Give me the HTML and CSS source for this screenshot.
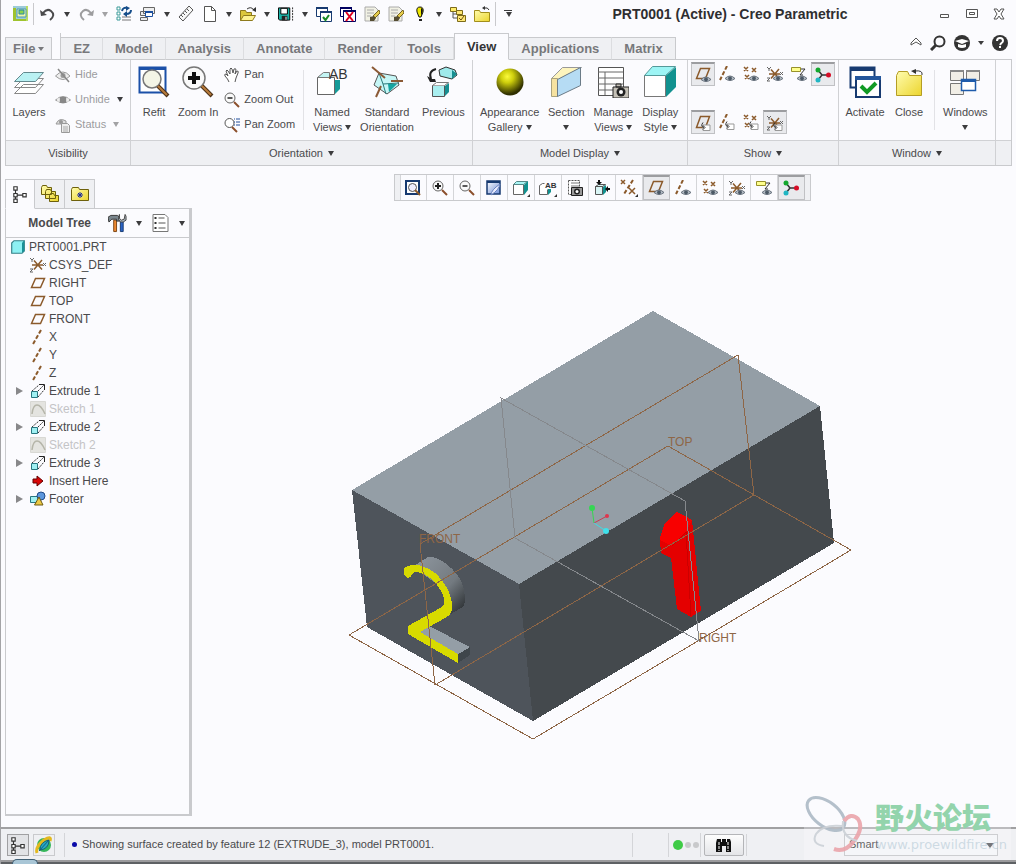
FILE: index.html
```html
<!DOCTYPE html>
<html lang="en">
<head>
    <meta charset="UTF-8">
    <meta name="viewport" content="width=device-width, initial-scale=1.0">
    <title>PRT0001 (Active) - Creo Parametric</title>
    <link rel="stylesheet" href="styles.css">
</head>
<body>
    <!-- Icon sprite -->
    <svg class="sprite" width="0" height="0" aria-hidden="true">
        <defs>
            <linearGradient id="folderFill" x1="0" y1="0" x2="1" y2="1"><stop offset="0" stop-color="#fffcae"/><stop offset="1" stop-color="#ecd52e"/></linearGradient>
            <linearGradient id="curl" x1="0" y1="0" x2="1" y2="1"><stop offset="0" stop-color="#fff"/><stop offset="1" stop-color="#6d8ed6"/></linearGradient>
            <radialGradient id="ball" cx=".4" cy=".3" r=".65"><stop offset="0" stop-color="#fbfb3c"/><stop offset=".35" stop-color="#cfcf0c"/><stop offset="1" stop-color="#303000"/></radialGradient>
            <linearGradient id="curve2" x1="0" y1="0" x2="1" y2="1"><stop offset="0" stop-color="#9098a0"/><stop offset=".6" stop-color="#737a80"/><stop offset="1" stop-color="#24282b"/></linearGradient>
            <g id="eye">
                <path d="M6 12.5q5-5 10 0q-5 4-10 0z" fill="#b3bbc4" stroke="#67717c"/>
                <circle cx="11" cy="12.3" r="1.9" fill="#4c5966"/>
            </g>
            <g id="tagcorner"><path d="M8 10h7v5.500H8z" fill="#fff" stroke="#999"/><path d="M8 7.500q-3 4 1 5M8 10.500l2 2-2 2" fill="none" stroke="#333"/></g>
            <g id="xs"><path d="M1 1l4 4M5 1l-4 4M9 2l4 4M13 2l-4 4M2 9l4 4M6 9l-4 4" stroke="#8b5a2b" stroke-width="1.500" fill="none"/></g>
            <g id="csysg"><path d="M2 8h11M4 3.500l8 9M12 3l-8 9.500" stroke="#8b5a2b" stroke-width="1.500"/><path d="M0 1l2 2 2-2M2 3v2M13 6l3 3M16 6l-3 3M0 12h3l-3 3h3" stroke="#666" fill="none"/></g>
        </defs>
        <symbol id="i-logo" viewBox="0 0 18 18"><path d="M1 1h15v15H1z" fill="#9ccbd8"/><path d="M1 3h3v11h12v2H1z" fill="#9fc32e"/><path d="M14 1h2v15h-2z" fill="#b9dc62"/><path d="M5 4h9v8H5z" fill="#f0f7a4" stroke="#4b96b8"/><path d="M7 5h5v4H7z" fill="#8bd34a" stroke="#2789ae"/></symbol>
        <symbol id="i-undo" viewBox="0 0 16 16"><path d="M3 7q4-5 8-2 5 4-1 9" fill="none" stroke="currentColor" stroke-width="2"/><path d="M0 4l1 6 6-1z" fill="currentColor"/></symbol>
        <symbol id="i-regen" viewBox="0 0 16 16"><path d="M1 1h3v3H1zM1 6h3v3H1zM1 11h3v3H1z" fill="#fff" stroke="#3b9a99"/><path d="M6 11h9M6 14h9" stroke="#777"/><path d="M6 5q1-4 5-3M15 4q0 4-5 4" fill="none" stroke="#154d8a" stroke-width="2"/><path d="M10 0l4 2-4 3zM11 5l-4 3 4 3z" fill="#154d8a"/></symbol>
        <symbol id="i-wins" viewBox="0 0 16 16"><path d="M3.500 1.500h11v6h-11zM.5 5.500h8v4h-8zM.5 11.500h7v3h-7z" fill="#eee" stroke="#666"/><path d="M5.500 5.500h7v5h-7z" fill="#fff" stroke="#1c4f9e"/><path d="M5 5h8v2H5z" fill="#1c4f9e"/></symbol>
        <symbol id="i-ruler" viewBox="0 0 16 16"><path d="M1 11L11 0l4 4L5 15z" fill="#f8f8f8" stroke="#555"/><path d="M3 9l2 2M5 7l2 2M7 5l2 2M9 3l2 2" stroke="#555"/></symbol>
        <symbol id="i-new" viewBox="0 0 16 16"><path d="M2.500.5h7l4 4v11h-11z" fill="#fff" stroke="#555"/><path d="M9.500.5v4h4" fill="none" stroke="#555"/></symbol>
        <symbol id="i-open" viewBox="0 0 16 16"><path d="M.5 4.500h5l1 2h5v8H.5z" fill="#dcc83c" stroke="#8e7a1d"/><path d="M3.500 9.500h12l-3 5H.5z" fill="#fdf391" stroke="#8e7a1d"/><path d="M7 3q4-3 7 1" fill="none" stroke="#333"/><path d="M12 4l4 2V1z" fill="#333"/></symbol>
        <symbol id="i-save" viewBox="0 0 17 16"><path d="M.5 1.500h12v13H2l-1.500-1z" fill="#1bb3a7" stroke="#000"/><path d="M3 2h7v6H3z" fill="#fff" stroke="#000"/><path d="M4 10h6v5H4z" fill="#222"/><path d="M8 11h1v3H8z" fill="#fff"/><path d="M15.500 1v15" stroke="#222" stroke-dasharray="2 1"/></symbol>
        <symbol id="i-activate" viewBox="0 0 16 16"><path d="M.5 1.500h11v9H.5z" fill="#fff" stroke="#173a70"/><path d="M4.500 5.500h11v10h-11z" fill="#fff" stroke="#173a70"/><path d="M4 5h12v2H4zM0 1h12v2H0z" fill="#173a70"/><path d="M7 11l2.500 3L13 9" fill="none" stroke="#188a24" stroke-width="2"/></symbol>
        <symbol id="i-closewin" viewBox="0 0 16 16"><path d="M.5 1.500h11v9H.5z" fill="#fff" stroke="#000060"/><path d="M0 1h12v2H0z" fill="#000060"/><path d="M3.500 4.500h12v11h-12z" fill="#fff" stroke="#000060"/><path d="M3 4h13v2H3z" fill="#000060"/><path d="M6 6l7 9M13 6l-7 9" stroke="#e00020" stroke-width="2"/></symbol>
        <symbol id="i-edit" viewBox="0 0 16 16"><path d="M1 1h10l3 3v11H1z" fill="#f1f1e4" stroke="#aaa"/><path d="M3 4h7M3 7h7M3 10h4" stroke="#aaa"/><path d="M15 4l-6 6 2 2 5-5z" fill="#e6cd4b" stroke="#776420"/><path d="M6 11l4-1 2 2-2 3H6z" fill="#554d32"/></symbol>
        <symbol id="i-bulb" viewBox="0 0 16 16"><path d="M8 1q4 0 3 5l-2 5H7L5 6Q4 1 8 1z" fill="#efe800" stroke="#111"/><path d="M9 2q3 1 1 5l-1 4z" fill="#111"/><path d="M7 13h3v2H7z" fill="#222"/></symbol>
        <symbol id="i-modeltree" viewBox="0 0 16 16"><path d="M.5 1.500h6v4h-6z" fill="#ffee6a" stroke="#7d6b19"/><path d="M3 6v6h4M3 8h4" fill="none" stroke="#555"/><path d="M6.500 4.500h6v4h-6zM7.500 9.500h8v6h-8z" fill="#ffe875" stroke="#7d6b19"/><path d="M9 12l2 2 3-4" fill="none" stroke="#6a4d12"/></symbol>
        <symbol id="i-folder" viewBox="0 0 16 16"><path d="M.5 4.500h5l1 2h9v9H.5z" fill="url(#folderFill)" stroke="#a28e1b"/><path d="M15 4q-1-3-5-2" fill="none" stroke="#333"/><path d="M8 2l3-2v4z" fill="#333"/></symbol>
        <symbol id="i-layers" viewBox="0 0 32 32"><path d="M1.500 27.500l9-9h20l-8 9zM1.500 21.500l9-9h20l-8 9z" fill="#fff" stroke="#888"/><path d="M1.500 15.500l9-9h20l-8 9z" fill="#b9f1f3" stroke="#63898e"/></symbol>
        <symbol id="i-hide" viewBox="0 0 16 16"><path d="M.5 9Q8 1 15 9q-7 7-14.500 0z" fill="#eee" stroke="#999"/><circle cx="8" cy="8.500" r="2.500" fill="#999"/><path d="M3 2l11 13" stroke="#888" stroke-width="1.500"/></symbol>
        <symbol id="i-unhide" viewBox="0 0 16 16"><path d="M.5 8Q8 1 15.500 8 8 14 .5 8z" fill="#ddd" stroke="#999"/><path d="M5 5h6v6H5z" fill="#888"/><path d="M3 6v5M13 6v5" stroke="#fff"/></symbol>
        <symbol id="i-status" viewBox="0 0 16 16"><path d="M1 7Q4 0 11 4v3z" fill="#ddd" stroke="#999"/><circle cx="6" cy="5" r="2" fill="#999"/><path d="M6.500 6.500h6l2 2v7h-8z" fill="#eee" stroke="#999"/><path d="M8 10h5M8 12h5M8 14h5" stroke="#aaa"/></symbol>
        <symbol id="i-refit" viewBox="0 0 32 32"><path d="M1.500 1.500h26v25h-26z" fill="#fff" stroke="#1b50a8" stroke-width="2"/><path d="M1 1h27v3H1z" fill="#1b50a8"/><circle cx="14" cy="13" r="9" fill="#f4f5e6" stroke="#777" stroke-width="1.500"/><path d="M20 20l10 10" stroke="#4d3218" stroke-width="4"/><path d="M20 20l9 9" stroke="#b77b3b" stroke-width="2"/></symbol>
        <symbol id="i-zoomin" viewBox="0 0 32 32"><circle cx="12" cy="12" r="11" fill="#fafafa" stroke="#777" stroke-width="1.500"/><path d="M12 6v12M6 12h12" stroke="#111" stroke-width="4"/><path d="M20 20l10 10" stroke="#4d3218" stroke-width="4"/><path d="M20 20l9 9" stroke="#b77b3b" stroke-width="2"/></symbol>
        <symbol id="i-pan" viewBox="0 0 16 16"><path d="M5 15q-1-3-4-6-1-2 1-2l2 2-2-5q1-2 2 0l2 3V2q1-2 2 0l1 4 1-4q2-1 2 1l-1 4 2-3q2 0 1 2l-2 5-1 4" fill="#fff" stroke="#555"/></symbol>
        <symbol id="i-zout" viewBox="0 0 16 16"><circle cx="6" cy="6" r="5" fill="#fafafa" stroke="#666"/><path d="M3.500 6h5" stroke="#222" stroke-width="1.500"/><path d="M10 10l5 5" stroke="#8b4f2b" stroke-width="2"/></symbol>
        <symbol id="i-zin" viewBox="0 0 16 16"><circle cx="6" cy="6" r="5" fill="#fafafa" stroke="#666"/><path d="M3 6h6M6 3v6" stroke="#222" stroke-width="2"/><path d="M10 10l5 5" stroke="#8b4f2b" stroke-width="2"/></symbol>
        <symbol id="i-panzoom" viewBox="0 0 16 16"><circle cx="5.500" cy="6" r="4.500" fill="#fff" stroke="#555"/><path d="M8 10l5 5" stroke="#8b4f2b" stroke-width="2"/><path d="M10 2h1M10 5h1M10 8h1M12 2h4M12 5h4M12 8h4" stroke="#234f9a"/></symbol>
        <symbol id="i-named" viewBox="0 0 32 32"><path d="M1.500 11.500h17v17h-17z" fill="#fff" stroke="#666"/><path d="M1.500 11.500l6-5h6v5z" fill="#c3f4f3" stroke="#777"/><path d="M19 14h5v9l-5 5z" fill="#169b98"/></symbol>
        <symbol id="i-standard" viewBox="0 0 32 32"><path d="M8 7l17 3 3 9-12 9L3 19z" fill="#c5f6f6" stroke="#555"/><path d="M8 7l4 11 16-1M12 18l3 10" fill="none" stroke="#297b7b"/><path d="M17 18h9l-8 8z" fill="#16a4a1"/><path d="M1 1l13 11M20 15h12M10 20L5 31" stroke="#8b5a36" stroke-width="2"/></symbol>
        <symbol id="i-previous" viewBox="0 0 32 32"><path d="M12 4l7-3 9 3 2 5-5 4-12-3z" fill="#9feaeb" stroke="#333"/><path d="M25 4l5 4-5 5z" fill="#168e90"/><path d="M5.500 19.500h12v11h-12z" fill="#a9eff0" stroke="#555"/><path d="M5.500 19.500l4-3h12l-4 3" fill="#fff" stroke="#777"/><path d="M18 20l4-3v9l-4 4z" fill="#168e90"/><path d="M9 3q-8 2-5 10" fill="none" stroke="#222" stroke-width="2"/><path d="M0 10l3 6h6l-1-3-3 0z" fill="#222"/></symbol>
        <symbol id="i-ball" viewBox="0 0 32 32"><circle cx="16" cy="16" r="13.500" fill="url(#ball)"/></symbol>
        <symbol id="i-section" viewBox="0 0 32 32"><path d="M1.500 12.500l11-11h19l-23 12z" fill="#fdf4bd" stroke="#999"/><path d="M1.500 12.500h6v18h-6z" fill="#f6e2a0" stroke="#aaa37d"/><path d="M7.500 13.500l23-12v18l-23 11z" fill="#b6dcf4" stroke="#6b7b87"/></symbol>
        <symbol id="i-manage" viewBox="0 0 32 32"><path d="M1.500 1.500h25v28h-25z" fill="#fff" stroke="#555"/><path d="M1 6h25M1 12h25M1 18h25M1 24h25M8 6v23" stroke="#666"/><path d="M16 21h16v11H16zM19 18h5v3h-5z" fill="#c4c0b6" stroke="#222"/><circle cx="24" cy="26" r="4.500" fill="#222"/><circle cx="24" cy="26" r="2" fill="#fff"/></symbol>
        <symbol id="i-cube" viewBox="0 0 32 32"><path d="M.5 9.500h21v21H.5z" fill="#fff" stroke="#777"/><path d="M.5 9.500l8-9h23l-10 9z" fill="#9df5f5" stroke="#599"/><path d="M22 9.500L32 1v20l-10 10z" fill="#11918f"/></symbol>
        <symbol id="i-plane" viewBox="0 0 16 16"><path d="M1.500 12.500l4-9h9l-4 9z" fill="none" stroke="#8b5a2b" stroke-width="1.500"/></symbol>
        <symbol id="i-planeeye" viewBox="0 0 16 16"><path d="M1.500 11.500l4-10h9l-4 10z" fill="none" stroke="#8b5a2b" stroke-width="1.500"/><use href="#eye"/></symbol>
        <symbol id="i-axis" viewBox="0 0 16 16"><path d="M11 1L3 15" stroke="#8b5a2b" stroke-width="2" stroke-dasharray="4 2"/></symbol>
        <symbol id="i-axiseye" viewBox="0 0 16 16"><path d="M8 0L1 14" stroke="#8b5a2b" stroke-width="2" stroke-dasharray="4 2"/><use href="#eye"/></symbol>
        <symbol id="i-ptseye" viewBox="0 0 16 16"><use href="#xs"/><use href="#eye"/></symbol>
        <symbol id="i-csys" viewBox="0 0 16 16"><use href="#csysg"/></symbol>
        <symbol id="i-csyseye" viewBox="0 0 16 16"><use href="#csysg"/><use href="#eye"/></symbol>
        <symbol id="i-noteeye" viewBox="0 0 16 16"><path d="M.5 1.500h9v4h-9z" fill="#ffff8d" stroke="#97912b"/><path d="M10 3h4l-5 6h3" fill="none" stroke="#333"/><use href="#eye"/></symbol>
        <symbol id="i-spin" viewBox="0 0 16 16"><path d="M3 3l4 5-4 5M7 8h6" fill="none" stroke="#333" stroke-width="1.500"/><circle cx="3" cy="3" r="2.500" fill="#13a82d"/><circle cx="3" cy="13" r="2.500" fill="#21b6c3"/><circle cx="13.500" cy="8" r="2.500" fill="#d60e27"/></symbol>
        <symbol id="i-planetag" viewBox="0 0 16 16"><path d="M1.500 12.500l4-11h9l-4 11z" fill="none" stroke="#8b5a2b" stroke-width="1.500"/><use href="#tagcorner"/></symbol>
        <symbol id="i-axistag" viewBox="0 0 16 16"><path d="M8 0L1 14" stroke="#8b5a2b" stroke-width="2" stroke-dasharray="4 2"/><use href="#tagcorner"/></symbol>
        <symbol id="i-ptstag" viewBox="0 0 16 16"><use href="#xs"/><use href="#tagcorner"/></symbol>
        <symbol id="i-csystag" viewBox="0 0 16 16"><use href="#csysg"/><use href="#tagcorner"/></symbol>
        <symbol id="i-bigactivate" viewBox="0 0 32 32"><path d="M1.500 1.500h24v20h-24z" fill="#fff" stroke="#173a70" stroke-width="2"/><path d="M1 1h25v4H1z" fill="#173a70"/><path d="M7 11h24v20H7z" fill="#fff" stroke="#173a70" stroke-width="2"/><path d="M6 10h26v4H6z" fill="#24569b"/><path d="M12 20l6 6 9-9" fill="none" stroke="#119a24" stroke-width="4"/></symbol>
        <symbol id="i-bigfolder" viewBox="0 0 32 32"><path d="M3.500 9.500l2-4h9l2 4h12v20h-25z" fill="url(#folderFill)" stroke="#b49d25"/><path d="M29 9q1-5-7-4" fill="none" stroke="#333"/><path d="M18 5l5-2v5z" fill="#333"/></symbol>
        <symbol id="i-bigwins" viewBox="0 0 32 32"><path d="M1.500 4.500h13v10h-13zM17.500 4.500h13v10h-13zM1.500 17.500h13v11h-13z" fill="#f1eee6" stroke="#777"/><path d="M1 4h14v2H1zM17 4h14v2H17z" fill="#888"/><path d="M12.500 13.500h14v11h-14z" fill="#fff" stroke="#1e5bab" stroke-width="1.500"/><path d="M12 13h15v3H12z" fill="#1e5bab"/></symbol>
        <symbol id="i-vrefit" viewBox="0 0 16 16"><path d="M1 1h13v13H1z" fill="#fff" stroke="#173a70" stroke-width="2"/><circle cx="7.500" cy="7.500" r="4" fill="#eef" stroke="#555"/><path d="M10 10l5 5" stroke="#8b5a2b" stroke-width="2"/></symbol>
        <symbol id="i-repaint" viewBox="0 0 16 16"><path d="M1 1h13v13H1z" fill="url(#curl)" stroke="#173a70" stroke-width="1.500"/><path d="M1 1h13v2H1z" fill="#173a70"/><path d="M5 15q0-5 9-11-1 6-9 11z" fill="#e8ecff" stroke="#6a84c0"/></symbol>
        <symbol id="i-vcube" viewBox="0 0 18 18"><path d="M1.500 5.500h10v10h-10z" fill="#fff" stroke="#666"/><path d="M1.500 5.500l3-3h11l-4 3z" fill="#a9f5f5" stroke="#588"/><path d="M12 6l4-4v9l-4 5z" fill="#11918f"/><path d="M18 15v3h-3z" fill="#333"/></symbol>
        <symbol id="i-vnamed" viewBox="0 0 18 18"><path d="M5.500 4.500h-2l-3 2v9h8v-5" fill="#fff" stroke="#666"/><path d="M9 10h3v3l-3 3z" fill="#11918f"/><path d="M18 15v3h-3z" fill="#333"/></symbol>
        <symbol id="i-vmanage" viewBox="0 0 16 16"><path d="M1.500.5h11v14h-11z" fill="#fff" stroke="#555" stroke-dasharray="2 1"/><path d="M4 3h8M4 6h8" stroke="#777"/><path d="M4.500 7.500h11v8h-11z" fill="#999" stroke="#222"/><circle cx="10" cy="11.500" r="3" fill="#222"/><circle cx="10" cy="11.500" r="1.500" fill="#fff"/></symbol>
        <symbol id="i-vanno" viewBox="0 0 16 16"><path d="M1.500 6.500h7v8h-7zM1.500 6.500l3-2h7l-3 2z" fill="#d9f5f5" stroke="#555"/><path d="M9 7l3-2v7l-3 3z" fill="#11918f"/><path d="M5 0v3M16 9h-2" stroke="#111" stroke-width="2"/><path d="M2 2h6L5 5zM14 6v6l-3-3z" fill="#111"/></symbol>
        <symbol id="i-vdatum" viewBox="0 0 18 18"><path d="M1 1l4 4M5 1L1 5M9 9l6 6M15 9l-6 6" stroke="#8b5a2b" stroke-width="1.500"/><path d="M13 1L4 15" stroke="#8b5a2b" stroke-width="2" stroke-dasharray="4 2"/><path d="M18 15v3h-3z" fill="#333"/></symbol>
        <symbol id="i-tree" viewBox="0 0 16 16"><path d="M2.500 1.500h3v3h-3zM2.500 7.500h3v3h-3zM2.500 12.500h3v3h-3zM10.500 7.500h3v3h-3zM4 4.500v3M4 10.500v2M5.500 9h5" fill="#fff" stroke="#333"/></symbol>
        <symbol id="i-folders" viewBox="0 0 18 18"><path d="M.5 2.500l1-2h4l1 2h4v7H.5zM4.500 6.500l1-2h4l1 2h4v7h-10zM8.500 10.500l1-2h3l1 2h4v6h-9z" fill="url(#folderFill)" stroke="#6d600b"/></symbol>
        <symbol id="i-fav" viewBox="0 0 18 18"><path d="M.5 4.500l1-2h6l1 2h9v11H.5z" fill="url(#folderFill)" stroke="#6d600b"/><path d="M9 7v6M6 10h6M7 8l4 4M11 8l-4 4" stroke="#1a2a9c"/></symbol>
        <symbol id="i-tools" viewBox="0 0 20 20"><path d="M6 7h3v12H6z" fill="#ee8a32" stroke="#7b4513"/><path d="M0 4l3-2h7l2 2v4H9V6H4l-3 3z" fill="#7a868d" stroke="#333"/><path d="M13 8h3v11h-3z" fill="#2a62c6" stroke="#173a70"/><path d="M12 1v4l2 2 3-1 1-5 1 2v4l-3 2h-3l-2-3z" fill="#aab4bb" stroke="#444"/></symbol>
        <symbol id="i-list" viewBox="0 0 18 20"><path d="M1.500 1.500h12l3 3v14h-15z" fill="#fff" stroke="#777"/><path d="M7 5h6M7 10h7M7 15h7" stroke="#555"/><path d="M3 4h2v2H3zM3 9h2v2H3zM3 14h2v2H3z" fill="#333"/></symbol>
        <symbol id="i-part" viewBox="0 0 14 14"><path d="M1.500 3.500l2-2h9v9l-2 2h-9z" fill="#8df1f3" stroke="#357f86"/><path d="M10.500 12V3.500L12.500 1v9.500z" fill="#1a9097"/></symbol>
        <symbol id="i-extrude" viewBox="0 0 16 16"><path d="M1.500 8.500h6v6h-6z" fill="#9ff0f2" stroke="#287780"/><path d="M2 8l7-6M8 8l6-6M8 14l6-7" fill="none" stroke="#333" stroke-dasharray="2 1"/><path d="M9 1.500h5.500V7" fill="none" stroke="#222"/></symbol>
        <symbol id="i-sketch" viewBox="0 0 16 16"><path d="M.5.5h15v15H.5z" fill="#e4e4e0" stroke="#d8d8d4"/><path d="M2 13Q3 4 7 4q4 0 8 9" fill="none" stroke="#b5b5a9" stroke-width="1.500"/></symbol>
        <symbol id="i-insert" viewBox="0 0 16 16"><path d="M3 6h4V3l6 5-6 5v-3H3z" fill="#d90606" stroke="#650000"/></symbol>
        <symbol id="i-footer" viewBox="0 0 16 16"><path d="M.5 5.500h8v6h-8z" fill="#9ff0f2" stroke="#287780"/><circle cx="11" cy="5" r="4" fill="#5c97dd" stroke="#204a87"/><path d="M4.500 14L9 6l4 8z" fill="#ecc944" stroke="#6c5811"/></symbol>
        <symbol id="i-browser" viewBox="0 0 18 18"><circle cx="9" cy="9" r="7" fill="#35b65a"/><path d="M2 17Q0 11 9 4q8-5 6 1" fill="none" stroke="#e3b91f" stroke-width="3"/><path d="M5 14Q5 6 14 4q0 9-9 10z" fill="#27a9c2" stroke="#17617c"/><path d="M4 15L14 4" stroke="#155a80"/></symbol>
        <symbol id="i-binocular" viewBox="0 0 18 16"><path d="M2 2h4v3h1V2h4v3h1V2h3l1 3v10h-5V9H7v6H1V6z" fill="#111"/><path d="M4 5v9M13 5v9" stroke="#fff" stroke-dasharray="3 1"/></symbol>
        <symbol id="i-min" viewBox="0 0 12 12"><path d="M1.500 6.500h8v3h-8z" fill="#fff" stroke="#555"/></symbol>
        <symbol id="i-max" viewBox="0 0 12 12"><path d="M.5 1.500h11v8H.5zM3.500 4.500h5v2h-5z" fill="#fff" stroke="#555"/></symbol>
        <symbol id="i-x" viewBox="0 0 12 12"><path d="M1 1h3l2 3 2-3h3L8 6l3 5H8L6 8l-2 3H1l3-5z" fill="#fff" stroke="#555"/></symbol>
        <symbol id="i-collapse" viewBox="0 0 12 12"><path d="M1 6l5-5 5 5v2L6 5 1 8z" fill="#fff" stroke="#555"/></symbol>
        <symbol id="i-search" viewBox="0 0 16 16"><circle cx="9.500" cy="6.500" r="5" fill="none" stroke="#333" stroke-width="2"/><path d="M6 10l-5 5" stroke="#333" stroke-width="3"/></symbol>
        <symbol id="i-learn" viewBox="0 0 16 16"><circle cx="8" cy="8" r="8" fill="#333"/><path d="M1 6l7-2 7 2-7 3zM4 9v3q4 2 8 0V9l-4 1z" fill="#fff"/></symbol>
        <symbol id="i-help" viewBox="0 0 16 16"><circle cx="8" cy="8" r="8" fill="#333"/><path d="M5 6q0-3 3-3t3 3q0 1-2 2.500l-1 1.500" fill="none" stroke="#fff" stroke-width="2"/><path d="M7 11h2v2H7z" fill="#fff"/></symbol>
    </svg>

    <header class="titlebar">
        <div class="quick-access">
            <svg class="app-logo"><use href="#i-logo"/></svg>
            <button class="qa" aria-label="Undo"><svg><use href="#i-undo"/></svg></button>
            <button class="qa-arrow" aria-label="Undo list"><i class="arrow"></i></button>
            <button class="qa dim" aria-label="Redo"><svg class="flip"><use href="#i-undo"/></svg></button>
            <button class="qa-arrow dim" aria-label="Redo list"><i class="arrow"></i></button>
            <button class="qa" aria-label="Regenerate"><svg><use href="#i-regen"/></svg></button>
            <button class="qa" aria-label="Windows"><svg><use href="#i-wins"/></svg></button>
            <button class="qa-arrow" aria-label="Window list"><i class="arrow"></i></button>
            <button class="qa" aria-label="Measure"><svg><use href="#i-ruler"/></svg></button>
            <button class="qa" aria-label="New"><svg><use href="#i-new"/></svg></button>
            <button class="qa-arrow" aria-label="New options"><i class="arrow"></i></button>
            <button class="qa" aria-label="Open"><svg><use href="#i-open"/></svg></button>
            <button class="qa-arrow" aria-label="Open options"><i class="arrow"></i></button>
            <button class="qa" aria-label="Save"><svg><use href="#i-save"/></svg></button>
            <button class="qa-arrow" aria-label="Save options"><i class="arrow"></i></button>
            <button class="qa" aria-label="Activate window"><svg><use href="#i-activate"/></svg></button>
            <button class="qa" aria-label="Close window"><svg><use href="#i-closewin"/></svg></button>
            <button class="qa" aria-label="Erase current"><svg><use href="#i-edit"/></svg></button>
            <button class="qa" aria-label="Erase not displayed"><svg><use href="#i-edit"/></svg></button>
            <button class="qa" aria-label="Tips"><svg><use href="#i-bulb"/></svg></button>
            <button class="qa-arrow" aria-label="Tip options"><i class="arrow"></i></button>
            <button class="qa" aria-label="Model setup"><svg><use href="#i-modeltree"/></svg></button>
            <button class="qa" aria-label="Working directory"><svg><use href="#i-folder"/></svg></button>
            <button class="qa-arrow customize" aria-label="Customize"><i class="arrow"></i></button>
        </div>
        <h1 class="title">PRT0001 (Active) - Creo Parametric</h1>
        <div class="window-buttons">
            <button aria-label="Minimize"><svg><use href="#i-min"/></svg></button>
            <button aria-label="Maximize"><svg><use href="#i-max"/></svg></button>
            <button aria-label="Close"><svg><use href="#i-x"/></svg></button>
        </div>
    </header>

    <div class="tab-row">
        <button class="tab file-tab">File<i class="arrow small-arrow"></i></button>
        <nav class="tabs">
            <button class="tab">EZ</button>
            <button class="tab">Model</button>
            <button class="tab">Analysis</button>
            <button class="tab">Annotate</button>
            <button class="tab">Render</button>
            <button class="tab">Tools</button>
            <button class="tab active">View</button>
            <button class="tab">Applications</button>
            <button class="tab">Matrix</button>
        </nav>
        <div class="help-buttons">
            <button aria-label="Collapse ribbon"><svg class="s12"><use href="#i-collapse"/></svg></button>
            <button aria-label="Search"><svg><use href="#i-search"/></svg></button>
            <button aria-label="Learning"><svg><use href="#i-learn"/></svg></button>
            <button aria-label="Learning options"><i class="arrow small-arrow"></i></button>
            <button aria-label="Help"><svg><use href="#i-help"/></svg></button>
        </div>
    </div>

    <div class="ribbon">
        <section class="group visibility">
            <div class="group-body">
                <button class="big"><svg><use href="#i-layers"/></svg><span>Layers</span></button>
                <div class="stack">
                    <button class="small dim"><svg><use href="#i-hide"/></svg>Hide</button>
                    <button class="small dim"><svg><use href="#i-unhide"/></svg>Unhide<i class="arrow dark"></i></button>
                    <button class="small dim"><svg><use href="#i-status"/></svg>Status<i class="arrow"></i></button>
                </div>
            </div>
            <h2 class="group-label">Visibility</h2>
        </section>
        <section class="group orientation">
            <div class="group-body">
                <button class="big"><svg><use href="#i-refit"/></svg><span>Refit</span></button>
                <button class="big"><svg><use href="#i-zoomin"/></svg><span>Zoom In</span></button>
                <div class="stack">
                    <button class="small"><svg><use href="#i-pan"/></svg>Pan</button>
                    <button class="small"><svg><use href="#i-zout"/></svg>Zoom Out</button>
                    <button class="small"><svg><use href="#i-panzoom"/></svg>Pan Zoom</button>
                </div>
                <div class="divider"></div>
                <div class="cluster">
                    <button class="big"><svg viewBox="0 0 32 32"><use href="#i-named"/><text class="ab" x="13" y="13">AB</text></svg><span>Named<br>Views <i class="arrow"></i></span></button>
                    <button class="big"><svg><use href="#i-standard"/></svg><span>Standard<br>Orientation</span></button>
                    <button class="big"><svg><use href="#i-previous"/></svg><span>Previous</span></button>
                </div>
            </div>
            <h2 class="group-label">Orientation <i class="arrow"></i></h2>
        </section>
        <section class="group model-display">
            <div class="group-body">
                <button class="big"><svg><use href="#i-ball"/></svg><span>Appearance<br>Gallery <i class="arrow"></i></span></button>
                <button class="big"><svg><use href="#i-section"/></svg><span>Section<br><i class="arrow"></i></span></button>
                <button class="big"><svg><use href="#i-manage"/></svg><span>Manage<br>Views <i class="arrow"></i></span></button>
                <button class="big"><svg><use href="#i-cube"/></svg><span>Display<br>Style <i class="arrow"></i></span></button>
            </div>
            <h2 class="group-label">Model Display <i class="arrow"></i></h2>
        </section>
        <section class="group show">
            <div class="group-body">
                <div class="toggle-grid">
                    <button class="toggle on" aria-label="Plane display"><svg><use href="#i-planeeye"/></svg></button>
                    <button class="toggle" aria-label="Axis display"><svg><use href="#i-axiseye"/></svg></button>
                    <button class="toggle" aria-label="Point display"><svg><use href="#i-ptseye"/></svg></button>
                    <button class="toggle" aria-label="Csys display"><svg><use href="#i-csyseye"/></svg></button>
                    <button class="toggle" aria-label="Annotation display"><svg><use href="#i-noteeye"/></svg></button>
                    <button class="toggle on" aria-label="Spin center"><svg><use href="#i-spin"/></svg></button>
                    <button class="toggle on" aria-label="Plane tags"><svg><use href="#i-planetag"/></svg></button>
                    <button class="toggle" aria-label="Axis tags"><svg><use href="#i-axistag"/></svg></button>
                    <button class="toggle" aria-label="Point tags"><svg><use href="#i-ptstag"/></svg></button>
                    <button class="toggle on" aria-label="Csys tags"><svg><use href="#i-csystag"/></svg></button>
                </div>
            </div>
            <h2 class="group-label">Show <i class="arrow"></i></h2>
        </section>
        <section class="group window">
            <div class="group-body">
                <button class="big"><svg><use href="#i-bigactivate"/></svg><span>Activate</span></button>
                <button class="big"><svg><use href="#i-bigfolder"/></svg><span>Close</span></button>
                <div class="divider"></div>
                <button class="big"><svg><use href="#i-bigwins"/></svg><span>Windows<br><i class="arrow"></i></span></button>
            </div>
            <h2 class="group-label">Window <i class="arrow"></i></h2>
        </section>
        <div class="group filler">
            <div class="group-body"></div>
            <div class="group-label"></div>
        </div>
    </div>

    <main class="workspace">
        <aside class="navigator">
            <div class="nav-tabs">
                <button class="nav-tab active" aria-label="Model Tree"><svg><use href="#i-tree"/></svg></button>
                <button class="nav-tab" aria-label="Folder Browser"><svg><use href="#i-folders"/></svg></button>
                <button class="nav-tab" aria-label="Favorites"><svg><use href="#i-fav"/></svg></button>
            </div>
            <div class="nav-panel">
                <div class="nav-header">
                    <h2>Model Tree</h2>
                    <button aria-label="Settings"><svg><use href="#i-tools"/></svg><i class="arrow"></i></button>
                    <button aria-label="Show"><svg><use href="#i-list"/></svg><i class="arrow"></i></button>
                </div>
                <ul class="tree">
                    <li class="root"><svg><use href="#i-part"/></svg>PRT0001.PRT</li>
                    <li><svg><use href="#i-csys"/></svg>CSYS_DEF</li>
                    <li><svg><use href="#i-plane"/></svg>RIGHT</li>
                    <li><svg><use href="#i-plane"/></svg>TOP</li>
                    <li><svg><use href="#i-plane"/></svg>FRONT</li>
                    <li><svg><use href="#i-axis"/></svg>X</li>
                    <li><svg><use href="#i-axis"/></svg>Y</li>
                    <li><svg><use href="#i-axis"/></svg>Z</li>
                    <li><button class="expand" aria-label="Expand Extrude 1"></button><svg><use href="#i-extrude"/></svg>Extrude 1</li>
                    <li class="hidden-item"><svg><use href="#i-sketch"/></svg>Sketch 1</li>
                    <li><button class="expand" aria-label="Expand Extrude 2"></button><svg><use href="#i-extrude"/></svg>Extrude 2</li>
                    <li class="hidden-item"><svg><use href="#i-sketch"/></svg>Sketch 2</li>
                    <li><button class="expand" aria-label="Expand Extrude 3"></button><svg><use href="#i-extrude"/></svg>Extrude 3</li>
                    <li><svg><use href="#i-insert"/></svg>Insert Here</li>
                    <li><button class="expand" aria-label="Expand Footer"></button><svg><use href="#i-footer"/></svg>Footer</li>
                </ul>
            </div>
        </aside>

        <section class="graphics">
            <div class="view-toolbar">
                <button aria-label="Refit"><svg><use href="#i-vrefit"/></svg></button>
                <button aria-label="Zoom In"><svg><use href="#i-zin"/></svg></button>
                <button aria-label="Zoom Out"><svg><use href="#i-zout"/></svg></button>
                <button aria-label="Repaint"><svg><use href="#i-repaint"/></svg></button>
                <button aria-label="Display Style"><svg class="s18"><use href="#i-vcube"/></svg></button>
                <button aria-label="Saved Orientations"><svg class="s18" viewBox="0 0 18 18"><use href="#i-vnamed"/><text class="ab-small" x="6" y="9">AB</text></svg></button>
                <button aria-label="View Manager"><svg><use href="#i-vmanage"/></svg></button>
                <button aria-label="Reorient"><svg><use href="#i-vanno"/></svg></button>
                <button aria-label="Datum filters"><svg class="s18"><use href="#i-vdatum"/></svg></button>
                <button class="on" aria-label="Planes"><svg><use href="#i-planeeye"/></svg></button>
                <button aria-label="Axes"><svg><use href="#i-axiseye"/></svg></button>
                <button aria-label="Points"><svg><use href="#i-ptseye"/></svg></button>
                <button aria-label="Coordinate systems"><svg><use href="#i-csyseye"/></svg></button>
                <button aria-label="Annotations"><svg><use href="#i-noteeye"/></svg></button>
                <button class="on" aria-label="Spin"><svg><use href="#i-spin"/></svg></button>
            </div>
            <svg class="model" viewBox="347 306 510 440" role="img" aria-label="Model">
                <g shape-rendering="crispEdges">
                    <!-- block -->
                    <path d="M653 311L820 406 519 584 352 490z" fill="#949ea6"/>
                    <path d="M352 490l167 94 14 137-166-94z" fill="#4e545b"/>
                    <path d="M519 584l301-178 14 137-301 178z" fill="#44494d"/>
                    <!-- digit on the left face -->
                    <path d="M412 567l16-10q12-1 27 15 10 11 10 28l-1 6-13 8-5-24z" fill="url(#curve2)"/>
                    <path d="M420 632l9-6 41 21-13 8z" fill="#949ea6"/>
                    <path d="M457 655l13-8v8l-12 8z" fill="#3f464b"/>
                    <path d="M404 568q8-5 18-2 16 5 25 22 6 12 5 22-1 5-7 8l-25 14 38 22v9l-50-29v-8l32-18q8-4 1-17-8-15-23-19-6-1-7 5l-4 1-3-3z" fill="#d8da00"/>
                    <!-- digit on the right face -->
                    <path d="M660 538l5-15 12-11 10 5 5 3 9 91-10 6-14-8-6-51-10-5z" fill="#f80000"/>
                    <path d="M660 540l12 6 14-14 6-12 9 91-10 6-14-8-6-51-10-5z" fill="#e40000"/>
                    <path d="M672 546l14-14 5 84" fill="none" stroke="#cc0000"/>
                    <!-- datum planes -->
                    <g fill="none" stroke="#8e6646">
                        <path d="M668 446l183 104-318 189-184-104z"/>
                        <path d="M420 544l318-189 16 140-319 190z"/>
                    </g>
                    <path d="M501 398l184 103 14 140-184-103z" fill="none" stroke="#85888c"/>
                </g>
                <!-- spin center -->
                <path d="M592 508l2 15" stroke="#35d653"/>
                <path d="M594 523l13-7" stroke="#c83c50"/>
                <path d="M594 523l12 8" stroke="#3fdce4"/>
                <circle cx="592" cy="508" r="3" fill="#35d653"/>
                <circle cx="607" cy="516" r="2" fill="#e0364e"/>
                <circle cx="606" cy="531" r="3" fill="#3fe0ea"/>
                <text x="668" y="446">TOP</text>
                <text x="419" y="543">FRONT</text>
                <text x="699" y="642">RIGHT</text>
            </svg>
        </section>
    </main>

    <footer class="statusbar">
        <button class="status-toggle on" aria-label="Toggle tree"><svg><use href="#i-tree"/></svg></button>
        <button class="status-toggle" aria-label="Toggle browser"><svg><use href="#i-browser"/></svg></button>
        <p class="message">Showing surface created by feature 12 (EXTRUDE_3), model PRT0001.</p>
        <div class="lights"><i class="light green"></i><i class="light"></i><i class="light"></i></div>
        <button class="find" aria-label="Find"><svg><use href="#i-binocular"/></svg></button>
        <div class="filter">
            <select aria-label="Selection filter"><option>Smart</option></select>
            <i class="arrow"></i>
        </div>
        <!-- forum watermark -->
        <div class="watermark">
            <svg viewBox="0 0 58 56">
                <ellipse cx="21" cy="17" rx="22" ry="12" transform="rotate(38 21 17)" fill="none" stroke="#adbac6" stroke-width="3"/>
                <path d="M39 24q7-9 14-2 6 9-4 22-9 12-20 8" fill="none" stroke="#eba5ab" stroke-width="4"/>
                <path d="M37 29q-19-2-26 8-5 10 8 12M38 24q-2 16 14 20" fill="none" stroke="#ccd1d7" stroke-width="2"/>
            </svg>
            <div class="wm-text">
                <strong lang="zh">野火论坛</strong>
                <span>www.proewildfire.cn</span>
            </div>
        </div>
    </footer>
    <div class="taskbar"><i class="orb"></i></div>
</body>
</html>
```
FILE: styles.css
```css
* {
    box-sizing: border-box;
}

body {
    margin: 0;
    min-height: 100vh;
    display: flex;
    flex-direction: column;
    border-left: 1px solid #a3a3a6;
    background: #fbfbfe;
    color: #4a4a4c;
    font-family: "Liberation Sans", Arial, sans-serif;
    font-size: 11px;
    line-height: 15px;
    overflow: hidden;
}

button {
    margin: 0;
    padding: 0;
    border: 0;
    background: none;
    color: inherit;
    font: inherit;
}

h1, h2, p, ul {
    margin: 0;
    padding: 0;
    font-size: inherit;
}

svg {
    width: 16px;
    height: 16px;
    display: block;
    flex: none;
}

.sprite {
    position: absolute;
    width: 0;
    height: 0;
}

.arrow {
    display: inline-block;
    flex: none;
    width: 0;
    border: 3px solid transparent;
    border-top: 5px solid #3c3c3e;
    border-bottom: 0;
    vertical-align: 1px;
}

.dim {
    color: #9c9c9e;
}

.dim .arrow {
    border-top-color: #a2a2a4;
}

.dim .arrow.dark {
    border-top-color: #3c3c3e;
}

/* Title bar */
.titlebar {
    display: flex;
    align-items: center;
    height: 28px;
}

.quick-access {
    display: flex;
    align-items: center;
    padding-left: 11px;
}

.app-logo {
    width: 22px;
    height: 22px;
    padding: 2px 3px 2px 0;
    border-right: 1px solid #c9c9cc;
    margin-right: 2px;
}

.qa {
    display: flex;
    justify-content: center;
    width: 24px;
}

.qa-arrow {
    display: flex;
    justify-content: center;
    width: 14px;
}

.flip {
    transform: scaleX(-1);
}

.customize {
    position: relative;
    height: 24px;
    align-items: center;
    width: 26px;
    margin-left: 1px;
    border-left: 1px solid #c9c9cc;
}

.customize::before {
    content: "";
    position: absolute;
    top: 8px;
    left: 8px;
    width: 8px;
    border-top: 1px solid #3c3c3e;
}

.title {
    flex: 1;
    text-align: center;
    font-size: 14px;
    font-weight: bold;
    color: #2e2e30;
}

.window-buttons {
    display: flex;
    gap: 15px;
    padding-right: 11px;
}

.window-buttons svg,
.s12 {
    width: 12px;
    height: 12px;
}

/* Ribbon tabs */
.tab-row {
    display: flex;
    align-items: flex-end;
    height: 32px;
    padding: 0 8px 0 4px;
    margin-bottom: -1px;
    position: relative;
}

.tabs {
    display: flex;
    align-items: flex-end;
    margin-left: 8px;
    border-left: 1px solid #c9cacd;
}

.tab {
    height: 23px;
    padding: 0 12px;
    border: 1px solid #c9cacd;
    border-left-width: 0;
    border-right-color: #dcdde0;
    background: #eff0f3;
    color: #77787b;
    font-size: 13px;
    font-weight: bold;
    white-space: nowrap;
}

.tab:last-child {
    border-right-color: #c9cacd;
}

.tab.active {
    height: 27px;
    border-left-width: 1px;
    border-right-color: #c9cacd;
    border-bottom-color: #fbfbfe;
    background: #fbfbfe;
    color: #333335;
}

.file-tab {
    display: flex;
    align-items: center;
    gap: 3px;
    padding: 0 7px;
    border-left-width: 1px;
    border-right-color: #c9cacd;
}

.small-arrow {
    border-width: 4px 3px 0;
}

.file-tab .arrow {
    border-top-color: #77787b;
}

.help-buttons {
    display: flex;
    align-items: center;
    gap: 8px;
    height: 30px;
    margin-left: auto;
    margin-bottom: 2px;
}

.help-buttons button {
    display: flex;
}

/* Ribbon */
.ribbon {
    display: flex;
    height: 107px;
    margin: 0 4px;
    border: 1px solid #c9cacd;
}

.group {
    display: flex;
    flex-direction: column;
    border-right: 1px solid #d0d1d4;
}

.group-body {
    flex: 1;
    display: flex;
    padding-left: 1px;
}

.group-label {
    height: 25px;
    border-top: 1px solid #d0d1d4;
    background: #eff0f3;
    text-align: center;
    font-weight: normal;
    line-height: 24px;
}

.group-label .arrow {
    margin-left: 2px;
}

.visibility {
    width: 125px;
}

.orientation {
    width: 342px;
}

.model-display {
    width: 215px;
}

.show {
    width: 151px;
}

.window {
    width: 157px;
}

.filler {
    flex: 1;
    border-right: 0;
}

.big {
    display: flex;
    flex-direction: column;
    align-items: center;
    gap: 7px;
    min-width: 44px;
    padding: 6px 2px 0;
    white-space: nowrap;
}

.big svg {
    width: 32px;
    height: 32px;
    overflow: visible;
}

.ab {
    font-size: 14px;
    fill: #333335;
}

.ab-small {
    font-size: 8px;
    font-weight: bold;
    fill: #333335;
}

.stack {
    display: flex;
    flex-direction: column;
    padding: 2px 0 0 4px;
}

.small {
    display: flex;
    align-items: center;
    gap: 4px;
    height: 25px;
    white-space: nowrap;
}

.small .arrow {
    margin-left: 3px;
}

.divider {
    width: 1px;
    height: 60px;
    margin: 10px 6px 0 8px;
    background: #e2e2e6;
}

.cluster {
    display: flex;
    gap: 4px;
}

.model-display .group-body {
    gap: 3px;
    padding-left: 5px;
}

.window .group-body {
    padding-left: 4px;
}

.window .divider {
    margin: 10px 6px 0 3px;
}

.toggle-grid {
    display: grid;
    grid-template-columns: repeat(6, 24px);
    grid-auto-rows: 24px;
    row-gap: 24px;
    padding: 2px 0 0 2px;
}

.toggle {
    display: flex;
    align-items: center;
    justify-content: center;
}

.toggle.on {
    border: 1px solid #c0c1c4;
    border-top: 2px solid #9c9da0;
    background: #e9eaed;
}

/* Workspace */
.workspace {
    flex: 1;
    display: flex;
}

.navigator {
    display: flex;
    flex-direction: column;
    width: 187px;
    padding: 13px 0 11px;
    margin-left: 4px;
}

.nav-tabs {
    display: flex;
    margin-bottom: -1px;
    position: relative;
}

.nav-tab {
    display: flex;
    align-items: center;
    justify-content: center;
    width: 30px;
    height: 30px;
    border: 1px solid #c9cacd;
    border-left: 0;
    background: #eff0f3;
}

.nav-tab svg {
    width: 18px;
    height: 18px;
}

.nav-tab.active {
    border-left: 1px solid #c9cacd;
    border-bottom-color: #fbfbfe;
    background: #fbfbfe;
}

.nav-panel {
    flex: 1;
    border: 1px solid #c9cacd;
    border-right-width: 3px;
    border-bottom-width: 2px;
}

.nav-header {
    display: flex;
    align-items: center;
    justify-content: flex-end;
    gap: 9px;
    height: 29px;
    padding-right: 4px;
    border-bottom: 1px solid #c9cacd;
}

.nav-header h2 {
    margin-right: 8px;
    font-size: 12px;
    font-weight: bold;
}

.nav-header button {
    display: flex;
    align-items: center;
    gap: 9px;
}

.nav-header svg {
    width: 19px;
    height: 20px;
}

.tree {
    list-style: none;
    font-size: 12px;
    line-height: 18px;
}

.tree li {
    display: flex;
    align-items: center;
    gap: 3px;
    height: 18px;
    padding-left: 24px;
    position: relative;
}

.tree li.root {
    padding-left: 4px;
}

.tree .hidden-item {
    color: #c4c4c6;
}

.expand {
    position: absolute;
    left: 10px;
    border: 4px solid transparent;
    border-left: 7px solid #88888a;
    border-right: 0;
}

.graphics {
    flex: 1;
    display: flex;
    flex-direction: column;
    align-items: center;
    padding: 8px 4px 0 0;
}

.view-toolbar {
    display: flex;
    height: 27px;
    padding: 0 5px;
    border: 1px solid #c9cacd;
    background: #eff0f3;
}

.view-toolbar button {
    display: flex;
    align-items: center;
    justify-content: center;
    width: 27px;
    border-right: 1px solid #d4d5d8;
    background: #fbfbfe;
}

.view-toolbar button:first-child {
    border-left: 1px solid #d4d5d8;
}

.view-toolbar .on {
    border: 1px solid #c0c1c4;
    border-top: 2px solid #9c9da0;
    background: #e9eaed;
}

.s18 {
    width: 18px;
    height: 18px;
}

.model {
    width: 510px;
    height: 440px;
    margin-top: 105px;
}

.model text {
    font-size: 12px;
    fill: #8e6646;
}

/* Status bar */
.statusbar {
    position: relative;
    display: flex;
    align-items: center;
    height: 33px;
    padding: 0 18px 0 6px;
    border-top: 2px solid #a0a0a2;
    background: #eff0f3;
}

.status-toggle {
    display: flex;
    align-items: center;
    justify-content: center;
    width: 22px;
    height: 22px;
    margin-right: 4px;
    border: 1px solid #c9cacd;
}

.status-toggle svg {
    width: 18px;
    height: 18px;
}

.status-toggle.on {
    border-color: #a0a0a2;
    background: #e2e3e6;
}

.message {
    flex: 1;
    display: flex;
    align-items: center;
    gap: 5px;
    height: 24px;
    margin-left: 5px;
    padding-left: 7px;
    border-left: 1px solid #d4d5d8;
    border-right: 1px solid #d4d5d8;
}

.message::before {
    content: "";
    width: 5px;
    height: 5px;
    border-radius: 50%;
    background: #0b0ba8;
}

.lights {
    display: flex;
    align-items: center;
    gap: 2px;
    width: 33px;
    height: 24px;
    margin-left: 35px;
    padding-left: 4px;
    border-left: 1px solid #d4d5d8;
    border-right: 1px solid #d4d5d8;
}

.light {
    width: 6px;
    height: 6px;
    border-radius: 50%;
    background: #c8c9cb;
}

.light.green {
    width: 10px;
    height: 10px;
    background: #3fcb46;
}

.find {
    display: flex;
    align-items: center;
    justify-content: center;
    width: 40px;
    height: 22px;
    margin-left: 3px;
    border: 1px solid #b4b5b8;
    border-radius: 2px;
    background: linear-gradient(#fdfdfd, #e4e5e8);
}

.find svg {
    width: 18px;
}

.filter {
    position: relative;
    height: 22px;
    margin-left: 2px;
    padding-left: 97px;
    border-left: 1px solid #d4d5d8;
}

.filter select {
    width: 154px;
    height: 22px;
    padding: 0 4px;
    appearance: none;
    border: 1px solid #b9babd;
    border-radius: 0;
    background: #f3f4f6;
    color: #1c1c1e;
    font: inherit;
}

.filter .arrow {
    position: absolute;
    top: 9px;
    right: 4px;
    border-width: 5px 4px 0;
}

.watermark {
    position: absolute;
    right: 5px;
    bottom: -1px;
    display: flex;
    align-items: flex-start;
    width: 207px;
    height: 64px;
    padding-left: 1px;
    background: rgba(252, 252, 254, 0.3);
    pointer-events: none;
}

.watermark svg {
    width: 58px;
    height: 56px;
    overflow: visible;
    opacity: 0.9;
}

.wm-text {
    display: flex;
    flex-direction: column;
    align-items: flex-end;
    flex: 1;
    padding-right: 4px;
}

.wm-text strong {
    margin-right: 16px;
    color: #93d4ac;
    font-family: "Noto Sans CJK SC", sans-serif;
    font-size: 29px;
    font-weight: 900;
    line-height: 38px;
}

.wm-text span {
    color: rgba(165, 190, 205, 0.5);
    font-family: "DejaVu Sans", sans-serif;
    font-size: 13px;
    line-height: 20px;
}

/* Desktop taskbar edge */
.taskbar {
    position: relative;
    height: 4px;
    border-top: 2px solid #9b9b9d;
    background: #5e6164;
}

.orb {
    position: absolute;
    left: 11px;
    top: -3px;
    width: 26px;
    height: 5px;
    border: 1px solid #3f5f74;
    border-bottom: 0;
    border-radius: 13px 13px 0 0;
    background: #a9c6d6;
}
```
